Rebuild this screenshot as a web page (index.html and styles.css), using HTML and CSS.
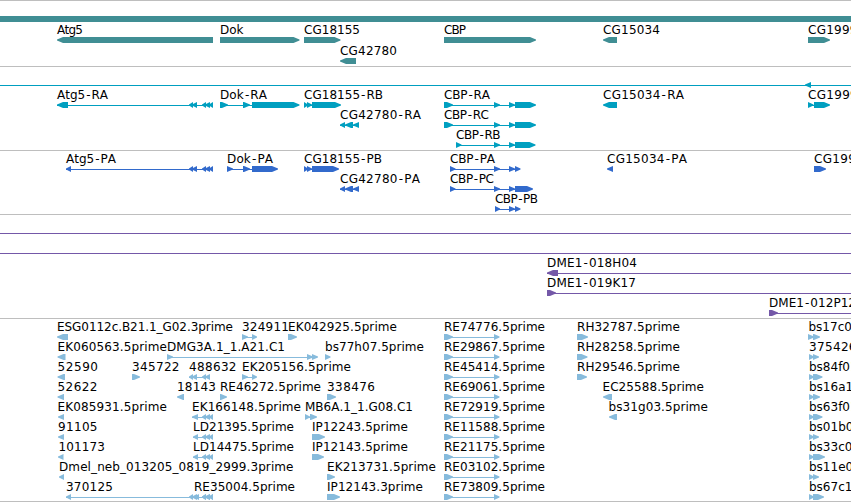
FILE: index.html
```
<!DOCTYPE html>
<html lang="en">
<head>
    <meta charset="UTF-8">
    <meta name="viewport" content="width=device-width, initial-scale=1.0">
    <title>Genome browser</title>
    <link rel="stylesheet" href="styles.css">
</head>
<body>
    <main class="browser">
        <svg class="track genes" data-track="genes"></svg>
        <svg class="track transcripts" data-track="transcripts"></svg>
        <svg class="track proteins" data-track="proteins"></svg>
        <svg class="track clones" data-track="clones"></svg>
        <svg class="track ests" data-track="ests"></svg>
    </main>
<script src="tracks.js"></script>
</body>
</html>
```
FILE: styles.css
```
body {
    margin: 0;
    background: white;
    overflow: hidden;
}

.browser {
    display: flex;
    flex-direction: column;
    border-bottom: 1px solid #bebebe;
}

.track {
    display: block;
    box-sizing: border-box;
    width: 100%;
    border-top: 1px solid #bebebe;
    overflow: hidden;
}

.label {
    font-family: "DejaVu Sans", sans-serif;
    font-size: 12px;
    font-kerning: none;
    fill: black;
}

.line {
    shape-rendering: crispEdges;
}

.genes {
    height: 66px;
    color: #408e94;
}

.transcripts {
    height: 84px;
    color: #009fc0;
}

.proteins {
    height: 64px;
    color: #326acc;
}

.clones {
    height: 104px;
    color: #7458a8;
}

.ests {
    height: 183px;
    color: #87bbdc;
}

.line, .exon {
    fill: currentColor;
}
```
FILE: tracks.js
```
const END = 860; // runs off the right edge

const tail = [[189, 193], [192, 197], [202, 206], [205, 210], [209, 213]];
const tail3 = tail.slice(2);
const re = [[444, 453], [494, 499.5]];

// feature: [label, y of the bar, strand, exons, label start, label end]
const tracks = {
    genes: [
        ["Atg5", 36, "-", [[57, 213]], 57, 83],
        ["Dok", 36, "+", [[220, 299.5]], 220, 243.5],
        ["CG18155", 36, "+", [[304, 340.5]], 304, 360],
        ["CG42780", 57, "-", [[340, 356]], 340, 397],
        ["CBP", 36, "+", [[444, 536]], 444, 466],
        ["CG15034", 36, "-", [[603, 617]], 603, 660],
        ["CG1999", 36, "+", [[808, 830]], 808, 857.5]
    ],
    transcripts: [
        ["", 15, "-", [[805, 811]], 805],
        ["Atg5-RA", 35, "-", [[57, 68], ...tail], 57, 108],
        ["Dok-RA", 35, "+", [[220, 228], [243, 250], [252, 299.5]], 220, 267],
        ["CG18155-RB", 35, "+", [[304, 308], [307, 312], [312, 341]], 304, 383],
        ["CG42780-RA", 55, "-", [[340, 345], [345, 353], [353, 359]], 340, 421],
        ["CBP-RA", 35, "+", [[444, 453], [494, 500], [509, 515], [515, 536]], 444, 490],
        ["CBP-RC", 55, "+", [[444, 453], [494, 500], [509, 515], [515, 536]], 444, 489],
        ["CBP-RB", 75, "+", [[456, 461.5], [494, 500], [509, 515], [515, 535.5]], 456, 500.5],
        ["CG15034-RA", 35, "-", [[603, 617]], 603, 684],
        ["CG1999-RA", 35, "+", [[808, 813.5], [814, 830]], 808, 881.5]
    ],
    proteins: [
        ["Atg5-PA", 15, "-", [[66, 71], ...tail], 66, 116],
        ["Dok-PA", 15, "+", [[227, 233], [243, 250], [252, 278]], 227, 273],
        ["CG18155-PB", 15, "+", [[304, 308], [307, 312], [312, 339]], 304, 382],
        ["CG42780-PA", 35, "-", [[340, 345], [345, 353], [353, 359]], 340, 420],
        ["CBP-PA", 15, "+", [[450, 455.5], [494, 500], [509, 515], [515, 520.5]], 450, 495],
        ["CBP-PC", 35, "+", [[450, 455.5], [494, 500], [509, 515], [515, 533]], 450, 494],
        ["CBP-PB", 55, "+", [[495, 500], [509, 515], [515, 520.5]], 495, 538],
        ["CG15034-PA", 15, "-", [[607, 613]], 607, 687],
        ["CG1999-PA", 15, "+", [[814, 826]], 814, 886.5]
    ],
    clones: [
        ["DME1-018H04", 55, "-", [[547, 558], [END, END + 6]], 547, 637],
        ["DME1-019K17", 75, "+", [[547, 556], [END, END + 6]], 547, 636],
        ["DME1-012P12", 95, "+", [[769, 778], [END, END + 6]], 769, 856]
    ],
    ests: [
        ["ESG0112c.B21.1_G02.3prime", 15, "-", [[57, 68]], 57, 233],
        ["324911", 15, "+", [[242, 248], [252, 257]], 242, 289],
        ["EK042925.5prime", 15, "+", [[288, 297]], 288, 397],
        ["RE74776.5prime", 15, "+", re, 444, 545],
        ["RH32787.5prime", 15, "+", [[577, 588]], 577, 680],
        ["bs17c01.5prime", 15, "+", [[808, 814], [813, 820]], 808.5],

        ["EK060563.5prime", 35, "-", [[57.5, 65.5]], 57.5, 167],
        ["DMG3A.1_1.A21.C1", 35, "+", [[167, 173], [307, 313], [312, 318]], 167, 285],
        ["bs77h07.5prime", 35, "+", [[325, 330.5]], 325, 424],
        ["RE29867.5prime", 35, "+", re, 444, 545],
        ["RH28258.5prime", 35, "+", [[577, 587.5]], 577, 680],
        ["375426", 35, "+", [[809, 814], [813, 819]], 809, 856.5],

        ["52590", 55, "-", [[57.5, 65]], 57.5, 98],
        ["345722", 55, "+", [[132, 140]], 132, 179.5],
        ["488632", 55, "-", [[189, 193], [192, 197], [202, 206], [205, 210]], 189, 236.5],
        ["EK205156.5prime", 55, "+", [[242, 248], [252, 257]], 242, 351],
        ["RE45414.5prime", 55, "+", re, 444, 545],
        ["RH29546.5prime", 55, "+", [[577, 587]], 577, 680],
        ["bs84f01.5prime", 55, "+", [[809, 814], [813, 822.5]], 809],

        ["52622", 75, "-", [[57.5, 64]], 57.5, 97.5],
        ["18143", 75, "-", [[177, 184]], 177, 216],
        ["RE46272.5prime", 75, "+", [[220, 227]], 220, 321],
        ["338476", 75, "+", [[327, 336]], 327, 375],
        ["RE69061.5prime", 75, "+", re, 444, 545],
        ["EC25588.5prime", 75, "-", [[603, 612]], 602.5, 704],
        ["bs16a11.5prime", 75, "+", [[809, 814], [813, 820]], 809],

        ["EK085931.5prime", 95, "-", [[58, 64]], 57.5, 167],
        ["EK166148.5prime", 95, "-", [[192, 198], ...tail3], 192, 301],
        ["MB6A.1_1.G08.C1", 95, "+", [[305, 310], [310, 317]], 305, 413],
        ["RE72919.5prime", 95, "+", re, 444, 545],
        ["bs31g03.5prime", 95, "-", [[609, 617]], 608.5, 708],
        ["bs63f01.5prime", 95, "+", [[809, 814], [813, 822.5]], 809],

        ["91105", 115, "-", [[58, 64]], 58, 97.5],
        ["LD21395.5prime", 115, "-", [[193, 198], ...tail3], 193, 294],
        ["IP12243.5prime", 115, "+", [[312, 325]], 312, 408],
        ["RE11588.5prime", 115, "+", re, 444, 545],
        ["bs01b01.5prime", 115, "+", [[809, 814], [813, 819]], 809],

        ["101173", 135, "-", [[58, 63.5]], 58.5, 105],
        ["LD14475.5prime", 135, "-", [[193, 198], ...tail3], 193, 294],
        ["IP12143.5prime", 135, "+", [[312, 324]], 312, 408],
        ["RE21175.5prime", 135, "+", re, 444, 545],
        ["bs33c01.5prime", 135, "+", [[809, 814], [813, 825]], 809],

        ["Dmel_neb_013205_0819_2999.3prime", 155, "-", [[59, 64]], 59, 293.5],
        ["EK213731.5prime", 155, "+", [[327, 335]], 327, 436],
        ["RE03102.5prime", 155, "+", re, 444, 545],
        ["bs11e01.5prime", 155, "+", [[809, 814], [813, 819]], 809],

        ["370125", 175, "-", [[66, 71], ...tail], 66, 113],
        ["RE35004.5prime", 175, "-", [[194, 199], ...tail3], 194, 295],
        ["IP12143.3prime", 175, "+", [[327, 340]], 327, 423],
        ["RE73809.5prime", 175, "+", re, 444, 545],
        ["bs67c11.5prime", 175, "+", [[809, 814], [813, 824]], 809]
    ]
};

function add(svg, name, attrs) {
    const el = document.createElementNS("http://www.w3.org/2000/svg", name);
    for (const key in attrs) el.setAttribute(key, attrs[key]);
    svg.appendChild(el);
    return el;
}

function addLine(svg, x1, x2, y, height = 1) {
    add(svg, "rect", { class: "line", x: x1, y: y, width: x2 - x1, height: height });
}

// block with a pointed end in the direction of the strand
function addExon(svg, x1, x2, y, strand) {
    const head = Math.min(6, x2 - x1);
    const tip = strand === "+" ? x2 : x1;
    const back = strand === "+" ? x1 : x2;
    const neck = strand === "+" ? x2 - head : x1 + head;
    add(svg, "polygon", {
        class: "exon",
        points: `${back},${y} ${neck},${y} ${tip},${y + 2.5} ${tip},${y + 3.5} ${neck},${y + 6} ${back},${y + 6}`
    });
}

function addFeature(svg, [name, y, strand, exons, start, end]) {
    if (exons.length > 1) {
        addLine(svg, exons[0][0], exons[exons.length - 1][1] - 2, y + 3);
    }
    exons.forEach(([x1, x2]) => addExon(svg, x1, x2, y, strand));

    if (!name) return;
    const label = add(svg, "text", { class: "label", x: start, y: y - 3 });
    if (end) label.setAttribute("textLength", end - start);
    // a bit of air on both sides of the hyphen
    const dash = name.indexOf("-");
    if (dash > 0) {
        label.setAttribute("dx", [...name].map((c, i) => i === dash || i === dash + 1 ? 1 : 0).join(" "));
    }
    label.textContent = name;
}

document.querySelectorAll(".track").forEach(svg => {
    const name = svg.dataset.track;

    // features that span the whole view
    if (name === "genes") addLine(svg, 0, END, 15, 6);
    if (name === "transcripts") addLine(svg, 0, END, 18);
    if (name === "clones") {
        addLine(svg, 0, END, 18);
        addLine(svg, 0, END, 38);
    }

    tracks[name].forEach(feature => addFeature(svg, feature));
});
```
